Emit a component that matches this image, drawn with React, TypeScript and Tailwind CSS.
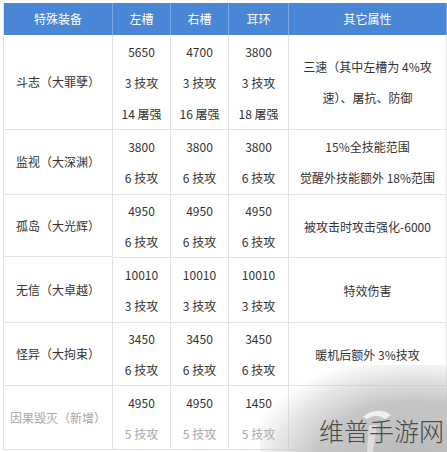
import React from 'react';

// Special equipment comparison table with watermark overlay

type Row = {
  name: string;
  left: string[];
  right: string[];
  ear: string[];
  other: string[];
  h: string;
  faded?: boolean;
};

const rows: Row[] = [
  {
    name: '斗志（大罪孽）',
    left: ['5650', '3 技攻', '14 屠强'],
    right: ['4700', '3 技攻', '16 屠强'],
    ear: ['3800', '3 技攻', '18 屠强'],
    other: ['三速（其中左槽为 4%攻', '速）、屠抗、防御'],
    h: 'h-[95px]',
  },
  {
    name: '监视（大深渊）',
    left: ['3800', '6 技攻'],
    right: ['3800', '6 技攻'],
    ear: ['3800', '6 技攻'],
    other: ['15%全技能范围', '觉醒外技能额外 18%范围'],
    h: 'h-[65px]',
  },
  {
    name: '孤岛（大光辉）',
    left: ['4950', '6 技攻'],
    right: ['4950', '6 技攻'],
    ear: ['4950', '6 技攻'],
    other: ['被攻击时攻击强化-6000'],
    h: 'h-[62px]',
  },
  {
    name: '无信（大卓越）',
    left: ['10010', '3 技攻'],
    right: ['10010', '3 技攻'],
    ear: ['10010', '3 技攻'],
    other: ['特效伤害'],
    h: 'h-[65px]',
  },
  {
    name: '怪异（大拘束）',
    left: ['3450', '6 技攻'],
    right: ['3450', '6 技攻'],
    ear: ['3450', '6 技攻'],
    other: ['暖机后额外 3%技攻'],
    h: 'h-[63px]',
  },
  {
    name: '因果毁灭（新增）',
    left: ['4950', '5 技攻'],
    right: ['4950', '5 技攻'],
    ear: ['1450', '5 技攻'],
    other: [],
    h: 'h-[64px]',
    faded: true,
  },
];

function Cell({ lines, faded }: { lines: string[]; faded?: boolean }) {
  return (
    <div className="flex flex-col items-center justify-center border-r border-b border-[#e2e2e2]">
      {lines.map((t, i) => (
        <span
          key={i}
          className={`leading-[31px] whitespace-nowrap ${faded && i > 0 ? 'text-[#a8a8a8]' : 'text-[#333]'}`}
        >
          {t}
        </span>
      ))}
    </div>
  );
}

export default function App() {
  return (
    <div
      className="relative w-[447px] h-[452px] overflow-hidden bg-white pt-[3px] pl-[3px] text-[12px]"
      style={{ fontFamily: '"Noto Sans CJK SC", "Noto Sans", sans-serif' }}
    >
      <div className="grid grid-cols-[109px_58px_58px_60px_158px] border-l border-[#e2e2e2]">
        {/* Header */}
        {['特殊装备', '左槽', '右槽', '耳环', '其它属性'].map((h) => (
          <div
            key={h}
            className="h-[32px] flex items-center justify-center bg-[#4a86d6] text-white border-r border-[#7aa6e2]"
          >
            {h}
          </div>
        ))}

        {rows.map((r) => (
          <React.Fragment key={r.name}>
            <div
              className={`${r.h} flex items-center justify-center border-r border-b border-[#e2e2e2] whitespace-nowrap ${
                r.faded ? 'text-[#a8a8a8]' : 'text-[#333]'
              }`}
            >
              {r.name}
            </div>
            <Cell lines={r.left} faded={r.faded} />
            <Cell lines={r.right} faded={r.faded} />
            <Cell lines={r.ear} faded={r.faded} />
            <Cell lines={r.other} />
          </React.Fragment>
        ))}
      </div>

      {/* Watermark */}
      <div className="absolute left-[260px] top-[365px] w-[220px] h-[100px] bg-[radial-gradient(ellipse_at_70%_100%,rgba(185,185,185,1)_0%,rgba(195,195,195,0.95)_45%,rgba(255,255,255,0)_78%)]" />
      <svg className="absolute left-[355px] top-[405px]" width="40" height="47" viewBox="0 0 40 47">
        <path d="M8 12 C16 4 28 4 36 10 L30 14 C24 10 18 10 12 14 Z" fill="rgba(255,255,255,0.75)" />
        <path d="M14 20 L22 20 L18 47 L12 47 Z" fill="rgba(255,255,255,0.45)" />
      </svg>
      <div className="absolute left-[319px] top-[414px] text-[25px] leading-[32px] text-[#4a4a4a] font-light whitespace-nowrap">
        维普手游网
      </div>
    </div>
  );
}
